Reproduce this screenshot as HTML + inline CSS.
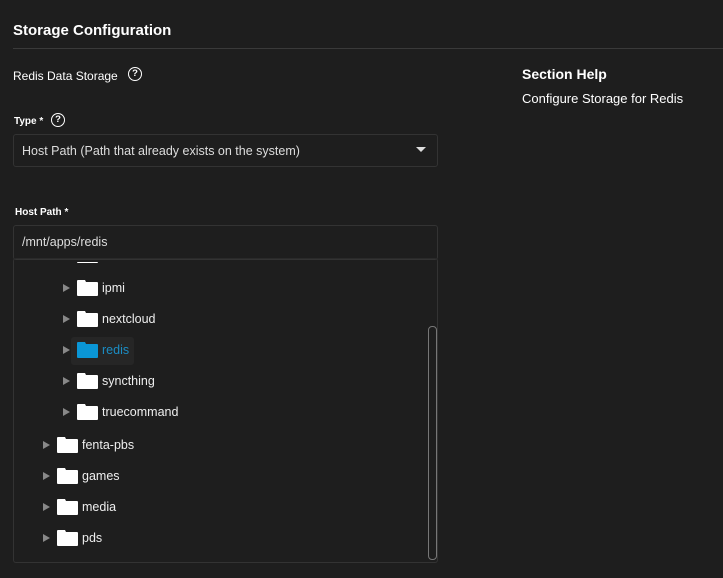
<!DOCTYPE html>
<html><head><style>
body{margin:0;width:723px;height:578px;background:#1e1e1e;font-family:"Liberation Sans",sans-serif;color:#fff;position:relative;overflow:hidden}
.a{position:absolute;white-space:nowrap}
.q{position:absolute;width:12px;height:12px;border:1.6px solid #fff;border-radius:50%;font-size:9.5px;font-weight:bold;text-align:center;line-height:12px}
.box{position:absolute;left:13px;width:423px;border:1px solid #333;border-radius:3px}
.tri{position:absolute;width:0;height:0;border-left:7px solid #888;border-top:4.5px solid transparent;border-bottom:4.5px solid transparent}
.f{position:absolute;width:21px;height:16px}
.t{position:absolute;font-size:12.5px;color:#eee}
</style></head><body>
<div class="a" style="left:13px;top:22px;font-size:15px;font-weight:bold">Storage Configuration</div>
<div class="a" style="left:13px;top:48px;width:710px;height:1px;background:#3a3a3a"></div>
<div class="a" style="left:13px;top:69px;font-size:12px">Redis Data Storage</div>
<div class="q" style="left:128px;top:67px">?</div>
<div class="a" style="left:522px;top:66px;font-size:14px;font-weight:bold">Section Help</div>
<div class="a" style="left:522px;top:91px;font-size:13px">Configure Storage for Redis</div>
<div class="a" style="left:14px;top:116px;font-size:10px;font-weight:bold">Type *</div>
<div class="q" style="left:51px;top:113px">?</div>
<div class="box" style="top:134px;height:31px"></div>
<div class="a" style="left:22px;top:144px;font-size:12.5px;color:#ddd">Host Path (Path that already exists on the system)</div>
<div class="a" style="left:416px;top:147px;border-left:5px solid transparent;border-right:5px solid transparent;border-top:5px solid #ddd"></div>
<div class="a" style="left:15px;top:207px;font-size:10px;font-weight:bold">Host Path *</div>
<div class="box" style="top:225px;height:33px"></div>
<div class="a" style="left:22px;top:235px;font-size:12.5px;color:#ddd">/mnt/apps/redis</div>
<div class="box" style="top:258px;height:303px;overflow:hidden;border-top-color:#2a2a2a">
<div class="a" style="left:414px;top:67px;width:7px;height:232px;border:1px solid #777;border-radius:4px"></div>
<div class="a" style="left:57px;top:78px;width:63px;height:28px;background:#262626;border-radius:3px"></div>
</div>
<div id="tree"></div>
<script>
var rows=[[63,77,102,255,'',0],[63,77,102,288,'ipmi',0],[63,77,102,319,'nextcloud',0],[63,77,102,350,'redis',1],[63,77,102,381,'syncthing',0],[63,77,102,412,'truecommand',0],[43,57,82,445,'fenta-pbs',0],[43,57,82,476,'games',0],[43,57,82,507,'media',0],[43,57,82,538,'pds',0]];
var h='';rows.forEach(function(r){var c=r[5]?'#0a96d6':'#fff';var top=r[3];
var clip=top<262?'clip-path:inset('+(262-(top-8))+'px 0 0 0);':'';
if(top>=262)h+='<div class="tri" style="left:'+r[0]+'px;top:'+(top-4)+'px"></div>';
h+='<svg class="f" style="left:'+r[1]+'px;top:'+(top-8)+'px;'+clip+'" viewBox="0 0 21 16"><path d="M1 0h7l1 2h11a1 1 0 0 1 1 1v12a1 1 0 0 1-1 1H1a1 1 0 0 1-1-1V1a1 1 0 0 1 1-1z" fill="'+c+'"/></svg>';
if(r[4])h+='<div class="t" style="left:'+r[2]+'px;top:'+(top-7)+'px;color:'+(r[5]?'#1b8dc4':'#eee')+'">'+r[4]+'</div>';});
document.getElementById('tree').innerHTML=h;
</script>
</body></html>
